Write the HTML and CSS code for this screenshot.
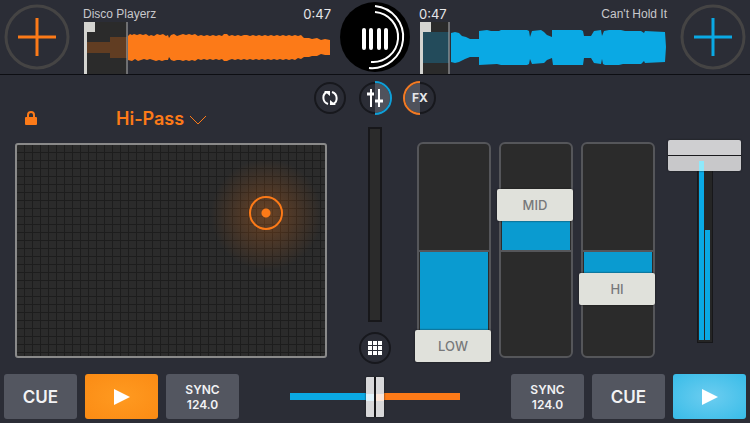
FILE: index.html
```html
<!DOCTYPE html>
<html lang="en">
<head>
    <meta charset="UTF-8">
    <meta name="viewport" content="width=device-width, initial-scale=1">
    <title>DJ Mixer</title>
    <link rel="stylesheet" href="styles.css">
</head>
<body>

    <!-- Decks -->
    <header class="decks">
        <button class="add-btn orange" aria-label="Load left track">
            <svg viewBox="0 0 66 66"><circle cx="33" cy="33" r="31"/><path d="M33 14v38M14 33h38"/></svg>
        </button>

        <section class="track">
            <div class="track-info">
                <span>Disco Playerz</span>
                <time>0:47</time>
            </div>
            <svg class="wave" viewBox="0 0 248 52" preserveAspectRatio="none">
                <rect class="played" x="1" width="43" height="52"/>
                <path fill="#613d22" d="M4 20H27V15H44V36H27V31H4z"/>
                <path fill="#fc7a18" d="M45 14L47 12L49 13L51 12L54 13L57 12L60 13L63 12L66 14L68 13L71 14L74 12L77 13L80 12L83 14L85 13L86 16L88 13L91 12L94 14L97 13L100 12L103 13L106 12L109 13L112 12L115 14L118 13L121 14L124 13L127 14L130 13L133 14L136 13L139 14L141 12L144 12L146 14L149 13L152 14L155 13L158 14L161 13L164 13L167 14L170 13L173 14L176 13L179 14L182 13L185 14L188 13L191 14L194 13L197 14L200 13L203 14L206 13L209 14L212 13L215 14L218 13L221 16L226 16L229 17L234 16L238 18L242 17L247 18V33L242 33L238 32L234 34L229 34L226 35L221 35L218 37L215 36L212 38L209 37L206 38L203 37L200 38L197 37L194 38L191 37L188 38L185 37L182 38L179 37L176 38L173 37L170 38L167 37L164 38L161 37L158 38L155 37L152 38L149 37L146 38L144 39L141 39L139 37L136 38L133 37L130 38L127 37L124 38L121 37L118 38L115 37L112 39L109 38L106 39L103 38L100 39L97 38L94 38L91 39L88 38L86 35L85 38L82 38L79 39L76 38L73 39L70 38L67 37L64 38L61 37L58 38L55 39L52 37L49 39L45 38z"/>
                <path class="flag" d="M1 0H12V10H4V52H1z"/>
                <path class="cursor" d="M44 0V52"/>
            </svg>
        </section>

        <button class="platter" aria-label="Switch view">
            <svg viewBox="0 0 70 70">
                <circle cx="35" cy="35" r="35"/>
                <path class="ring" d="M35 4A31 31 0 1 1 29 66M35 10A25 25 0 1 1 31 60"/>
                <path class="bars" d="M24 28v18M31 28v18M39 28v18M46 28v18"/>
            </svg>
        </button>

        <section class="track">
            <div class="track-info">
                <time>0:47</time>
                <span>Can't Hold It</span>
            </div>
            <svg class="wave" viewBox="0 0 248 52" preserveAspectRatio="none">
                <rect class="played" x="1" width="29" height="52"/>
                <path fill="#234b5b" d="M4 10H30V41H4z"/>
                <path fill="#0aa9e4" d="M32 11L36 10L40 11L43 14L47 15L51 17L60 17V9L68 8L72 9L80 9L82 8L108 8L110 9L111 15L113 9L122 8L125 10L128 13L133 15V8L162 8L164 9L165 14H172L175 9L182 8L183 14L185 9L190 8L202 8L206 9L222 9L225 11L226 9L246 10L247 25L246 40L226 41L225 39L222 42L204 42L200 43L186 43L184 42L183 37L182 42L175 41L172 36H165L164 43L134 43L133 36L128 38L125 41L113 42L111 37L110 42L108 43L82 43L78 42L60 43V35L51 35L46 37L40 40L36 41L32 40z"/>
                <path class="flag" d="M1 0H12V10H4V52H1z"/>
                <path class="cursor" d="M30 0V52"/>
            </svg>
        </section>

        <button class="add-btn blue" aria-label="Load right track">
            <svg viewBox="0 0 66 66"><circle cx="33" cy="33" r="31"/><path d="M33 14v38M14 33h38"/></svg>
        </button>
    </header>

    <main class="mixer">
        <!-- Effect pad -->
        <section class="fx">
            <div class="fx-head">
                <button class="lock" aria-label="Lock effect">
                    <svg viewBox="0 0 12 14"><path fill="none" stroke="#fc7a18" stroke-width="2" d="M3 7V4a3 3 0 0 1 6 0v3"/><rect y="6" width="12" height="8" rx="1" fill="#fc7a18"/></svg>
                </button>
                <button class="fx-name">
                    Hi-Pass
                    <svg viewBox="0 0 18 10"><path d="M1 1l8 8 8-8"/></svg>
                </button>
            </div>
            <div class="pad">
                <span class="pin"></span>
            </div>
        </section>

        <!-- View switch and level -->
        <section class="center">
            <nav class="views">
                <button class="round" aria-label="Loop">
                    <svg viewBox="0 0 34 34">
                        <circle class="base" cx="17" cy="17" r="15"/>
                        <path class="icon" d="M15 23C9 21 9 13 14 11M19 11C25 13 25 21 20 23"/>
                        <path class="solid" d="M11 10h6v5zM23 24h-6v-5z"/>
                    </svg>
                </button>
                <button class="round" aria-label="Equalizer">
                    <svg viewBox="0 0 34 34">
                        <circle class="base" cx="17" cy="17" r="15"/>
                        <path class="half" d="M17 2a15 15 0 0 1 0 30z"/>
                        <path class="arc" stroke="#0f9fd8" d="M17 1a16 16 0 0 1 0 32"/>
                        <path class="icon" d="M13 8v18M21 8v18"/>
                        <path class="icon knobs" d="M9 13h7M17 20h8"/>
                    </svg>
                </button>
                <button class="round">
                    <svg viewBox="0 0 34 34">
                        <circle class="base" cx="17" cy="17" r="15"/>
                        <path class="half" d="M17 2a15 15 0 0 0 0 30z"/>
                        <path class="arc" stroke="#f27a24" d="M17 1a16 16 0 0 0 0 32"/>
                    </svg>
                    <span>FX</span>
                </button>
            </nav>
            <div class="slot"></div>
            <button class="round" aria-label="Sample pads">
                <svg viewBox="0 0 34 34">
                    <circle class="base" cx="17" cy="17" r="15"/>
                    <path class="solid" d="M10 10h4v4h-4zM15 10h4v4h-4zM20 10h4v4h-4zM10 15h4v4h-4zM15 15h4v4h-4zM20 15h4v4h-4zM10 20h4v4h-4zM15 20h4v4h-4zM20 20h4v4h-4z"/>
                </svg>
            </button>
        </section>

        <!-- Equalizer and volume -->
        <section class="eq">
            <div class="band" style="--value: 0">
                <div class="fill below"></div>
                <input type="range" id="low" min="0" max="100" value="0">
                <label for="low">LOW</label>
            </div>
            <div class="band" style="--value: 74">
                <div class="fill above"></div>
                <input type="range" id="mid" min="0" max="100" value="74">
                <label for="mid">MID</label>
            </div>
            <div class="band" style="--value: 30">
                <div class="fill below"></div>
                <input type="range" id="hi" min="0" max="100" value="30">
                <label for="hi">HI</label>
            </div>
            <div class="volume">
                <div class="levels">
                    <span style="height: 91%"></span>
                    <span style="height: 56%"></span>
                </div>
                <input type="range" aria-label="Volume" min="0" max="100" value="100">
            </div>
        </section>
    </main>

    <!-- Transport -->
    <footer class="transport">
        <div class="btn-group">
            <button class="btn">CUE</button>
            <button class="btn play-orange" aria-label="Play left deck"><svg viewBox="0 0 16 16"><path d="M0 0l16 8-16 8z"/></svg></button>
            <button class="btn sync">SYNC<br>124.0</button>
        </div>
        <input class="crossfader" type="range" aria-label="Crossfader" min="0" max="100" value="50">
        <div class="btn-group">
            <button class="btn sync">SYNC<br>124.0</button>
            <button class="btn">CUE</button>
            <button class="btn play-blue" aria-label="Play right deck"><svg viewBox="0 0 16 16"><path d="M0 0l16 8-16 8z"/></svg></button>
        </div>
    </footer>

</body>
</html>
```

FILE: styles.css
```css
* {
    margin: 0;
    padding: 0;
    box-sizing: border-box;
}
body {
    min-height: 100vh;
    display: flex;
    flex-direction: column;
    font-family: Inter, "Liberation Sans", sans-serif;
    background: #2b2d36;
    color: #e6e6e8;
}
button {
    border: none;
    background: none;
    color: inherit;
    font-family: inherit;
    cursor: pointer;
}
svg {
    display: block;
}

/* Decks */
.decks {
    height: 75px;
    display: flex;
    align-items: center;
    padding: 0 4px;
    border-bottom: 1px solid #0d0e13;
}
.add-btn svg {
    width: 66px;
    height: 66px;
    fill: none;
    stroke-width: 3;
}
.add-btn circle {
    stroke: #454444;
}
.orange path {
    stroke: #fc7a18;
}
.blue path {
    stroke: #0aa9e4;
}
.track {
    flex: 1;
    margin: 0 9px 0 13px;
    align-self: flex-end;
}
.platter + .track {
    margin: 0 13px 0 9px;
}
.track-info {
    display: flex;
    justify-content: space-between;
    align-items: center;
    height: 17px;
    font-family: "Liberation Sans", sans-serif;
    font-size: 12px;
    color: #c8c8cc;
}
.track-info time {
    font-family: Inter, sans-serif;
    font-size: 13px;
    color: #e6e6e8;
}
.wave {
    width: 100%;
    height: 52px;
}
.played {
    fill: #2b2b2b;
}
.flag {
    fill: #d4d4d0;
}
.cursor {
    stroke: #b4b4b4;
    stroke-width: 1;
}
.platter svg {
    width: 70px;
    height: 70px;
}
.ring {
    fill: none;
    stroke: #fff;
    stroke-width: 2;
}
.bars {
    stroke: #fff;
    stroke-width: 4;
    stroke-linecap: round;
}

/* Mixer */
.mixer {
    flex: 1;
    display: grid;
    grid-template-columns: 1fr 84px 1fr;
}
.fx {
    padding: 33px 6px 0 15px;
}
.fx-head {
    display: flex;
    align-items: center;
    height: 20px;
    margin-bottom: 15px;
    padding-left: 10px;
    color: #fc7a18;
}
.lock svg {
    width: 12px;
    height: 14px;
}
.fx-name {
    display: flex;
    align-items: center;
    gap: 5px;
    margin-left: 79px;
    font-size: 18px;
    font-weight: 600;
}
.fx-name svg {
    width: 18px;
    height: 10px;
    margin-top: 3px;
    fill: none;
    stroke: #fc7a18;
    stroke-width: 1;
}
.pad {
    position: relative;
    height: 215px;
    border: 2px solid #8a8a8a;
    border-radius: 3px;
    background:
        radial-gradient(circle at 81% 33%, rgba(252, 122, 24, 0.3), transparent 56px),
        repeating-linear-gradient(90deg, transparent 0 7px, #1d1d1d 7px 8px),
        repeating-linear-gradient(#2b2b2b 0 7px, #1d1d1d 7px 8px);
}
.pin {
    position: absolute;
    left: 81%;
    top: 32%;
    width: 34px;
    height: 34px;
    transform: translate(-50%, -50%);
    border: 2px solid #fc7a18;
    border-radius: 50%;
    background: radial-gradient(circle, #fc7a18 4px, transparent 5px);
}
.center {
    display: flex;
    flex-direction: column;
    align-items: center;
    padding-top: 6px;
}
.views {
    display: flex;
    justify-content: center;
    gap: 11px;
}
.round {
    position: relative;
}
.round svg {
    width: 34px;
    height: 34px;
}
.round span {
    position: absolute;
    inset: 0;
    line-height: 34px;
    font-size: 12px;
    font-weight: 700;
}
.base {
    fill: #2b2d36;
    stroke: #17181d;
    stroke-width: 2;
}
.half {
    fill: #4f525c;
}
.arc {
    fill: none;
    stroke-width: 2;
}
.icon {
    fill: none;
    stroke: #fff;
    stroke-width: 2;
}
.knobs {
    stroke-width: 3;
}
.solid {
    fill: #fff;
}
.slot {
    width: 14px;
    height: 195px;
    margin: 12px 0 9px;
    border: 2px solid #17171a;
    background: #2b2b2b;
}

/* Equalizer */
.eq {
    display: flex;
    gap: 8px;
    padding: 67px 9px 0 0;
}
.band {
    position: relative;
    flex: 1;
    height: 216px;
    border: 2px solid #55565a;
    border-radius: 6px;
    background: linear-gradient(transparent 50%, #55565a 50% 51%, transparent 51%), #2b2b2b;
}
.fill {
    position: absolute;
    left: 1px;
    right: 1px;
    background: #0a9bd0;
}
.fill.below {
    top: calc(50% + 2px);
    bottom: calc(var(--value) * 1% + 8px);
}
.fill.above {
    top: calc(100% - var(--value) * 1%);
    bottom: 50%;
}
input[type="range"] {
    appearance: none;
    background: none;
    cursor: pointer;
}
.band input {
    position: absolute;
    top: -5px;
    left: -4px;
    width: calc(100% + 6px);
    height: 223px;
    writing-mode: vertical-lr;
    direction: rtl;
}
.band input::-webkit-slider-thumb {
    appearance: none;
    width: 76px;
    height: 32px;
    border-radius: 2px;
    background: #e0e1db;
    box-shadow: 0 0 2px #17171a;
}
.band label {
    position: absolute;
    left: -4px;
    right: -2px;
    bottom: calc(var(--value) * 191px / 100 - 6px);
    line-height: 32px;
    text-align: center;
    font-size: 13px;
    font-weight: 500;
    color: #77787a;
    pointer-events: none;
}
.volume {
    position: relative;
    width: 73px;
    height: 201px;
    margin-left: 5px;
}
.levels {
    display: flex;
    justify-content: center;
    align-items: flex-end;
    gap: 1px;
    width: 16px;
    height: 201px;
    margin: 0 auto;
    padding-bottom: 2px;
    border: 1px solid #17171a;
    background: #252525;
}
.levels span {
    width: 5px;
    background: #0aa9e4;
}
.volume input {
    position: absolute;
    top: -2px;
    left: 0;
    width: 73px;
    height: 203px;
    writing-mode: vertical-lr;
    direction: rtl;
}
.volume input::-webkit-slider-thumb {
    appearance: none;
    width: 73px;
    height: 31px;
    border-radius: 2px;
    background:
        linear-gradient(#8fe9fb, #8fe9fb) 31px 100% / 5px 10px no-repeat,
        linear-gradient(#cfcfd1 15px, #1b1b1e 15px 16px, #c8c8ca 16px);
    box-shadow: 0 0 2px #17171a;
}

/* Transport */
.transport {
    display: flex;
    justify-content: space-between;
    align-items: center;
    padding: 4px;
}
.btn-group {
    display: flex;
    gap: 8px;
}
.btn {
    display: flex;
    justify-content: center;
    align-items: center;
    width: 73px;
    height: 45px;
    border-radius: 3px;
    background: #535660;
    color: #f2f2f4;
    font-size: 17px;
    font-weight: 600;
}
.sync {
    font-size: 12px;
    line-height: 15px;
}
.btn svg {
    width: 16px;
    height: 16px;
    fill: #fff;
}
.play-orange {
    background: radial-gradient(#ff9a20, #fb8b14);
}
.play-blue {
    background: radial-gradient(#6ccdf0, #38bce8);
}
.crossfader {
    width: 170px;
    height: 41px;
}
.crossfader::-webkit-slider-runnable-track {
    height: 7px;
    background: linear-gradient(90deg, #0aa9e4 50%, #fc7a18 50%);
}
.crossfader::-webkit-slider-thumb {
    appearance: none;
    width: 18px;
    height: 40px;
    margin-top: -16px;
    border-radius: 1px;
    background:
        linear-gradient(90deg, #e0f2fa 8px, transparent 8px 10px, #fbe6da 10px) 0 50% / 100% 7px no-repeat,
        linear-gradient(90deg, #d8d8da 8px, #17171a 8px 10px, #d8d8da 10px);
    box-shadow: 0 0 2px #17171a;
}
```
